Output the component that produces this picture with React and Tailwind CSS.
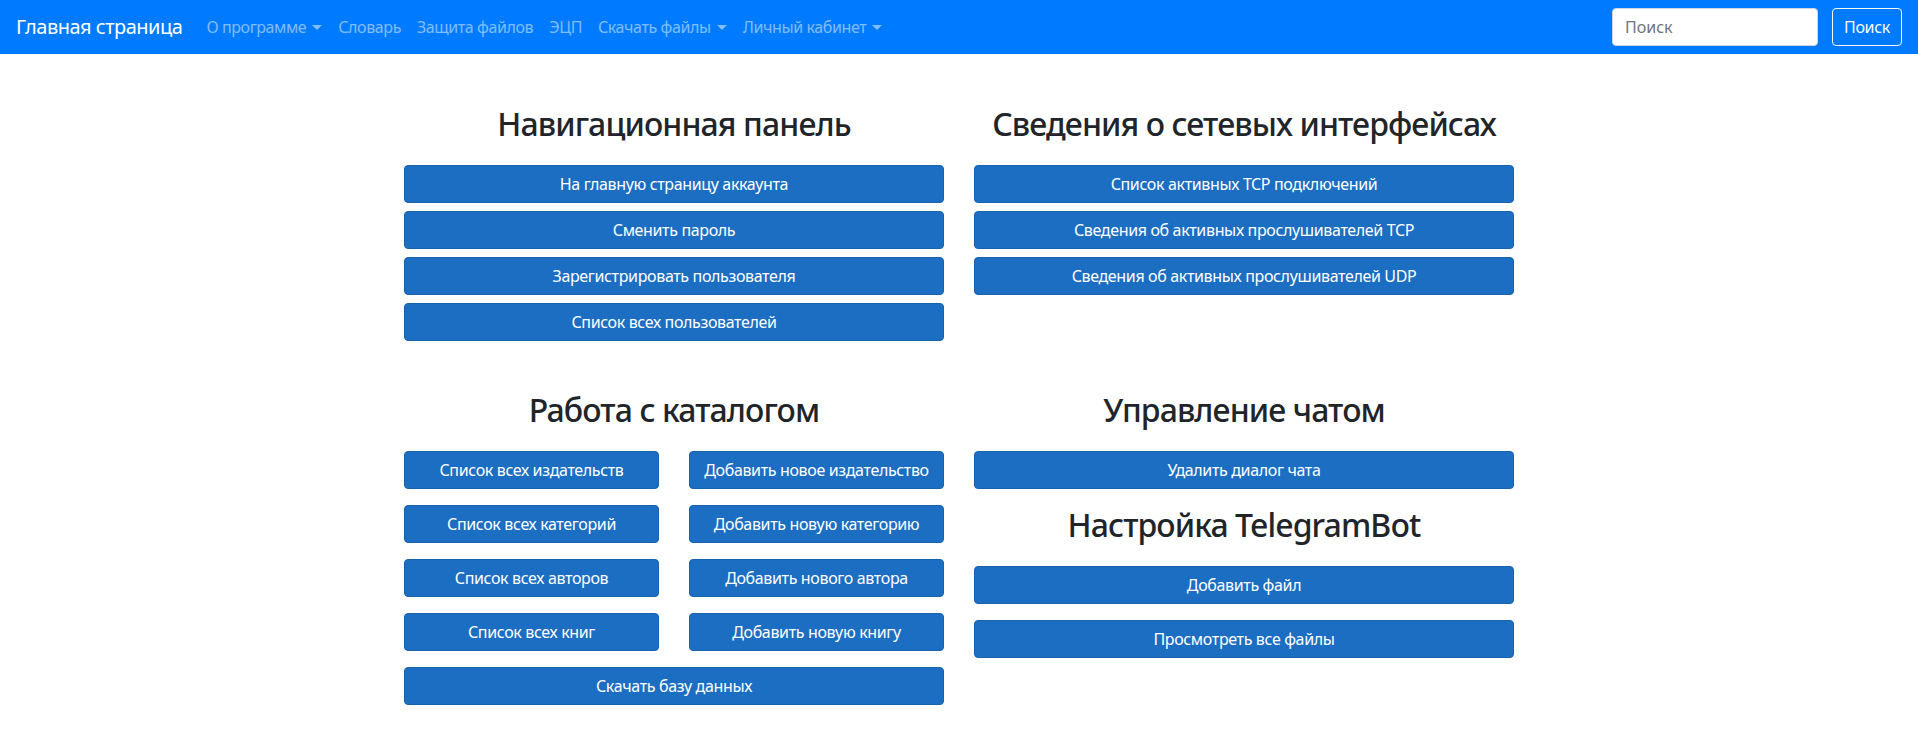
import React from 'react';

const font = { fontFamily: '"Noto Sans", "Open Sans", sans-serif' };

const Caret = () => (
  <span className="inline-block ml-[6px] align-[3px] border-x-[5px] border-t-[5px] border-x-transparent border-t-current" />
);

const Btn = ({ children, className = '' }) => (
  <button
    type="button"
    className={`w-full h-[38px] rounded-[4px] border border-[#1861ac] bg-[#1b6ec2] text-white text-[16px] leading-6 tracking-[-0.35px] ${className}`}
  >
    {children}
  </button>
);

const Heading = ({ children, className = '' }) => (
  <h2 className={`text-center text-[32px] leading-[38px] font-medium text-[#212529] tracking-[-0.9px] mb-[22px] ${className}`}>
    {children}
  </h2>
);

const navLinks = [
  { label: 'О программе', drop: true },
  { label: 'Словарь' },
  { label: 'Защита файлов' },
  { label: 'ЭЦП' },
  { label: 'Скачать файлы', drop: true },
  { label: 'Личный кабинет', drop: true },
];

const catalog = [
  ['Список всех издательств', 'Добавить новое издательство'],
  ['Список всех категорий', 'Добавить новую категорию'],
  ['Список всех авторов', 'Добавить нового автора'],
  ['Список всех книг', 'Добавить новую книгу'],
];

export default function App() {
  return (
    <div className="min-h-screen bg-white" style={font}>
      <nav className="h-[54px] bg-[#007bff] flex items-center px-4">
        <a className="text-white text-[20px] leading-[30px] tracking-[-0.5px] mr-4 whitespace-nowrap">Главная страница</a>
        <ul className="flex items-center">
          {navLinks.map((l) => (
            <li key={l.label} className="px-2 text-[16px] leading-6 tracking-[-0.4px] text-white/50 whitespace-nowrap">
              {l.label}
              {l.drop && <Caret />}
            </li>
          ))}
        </ul>
        <form className="ml-auto flex items-center gap-[14px]">
          <input
            placeholder="Поиск"
            className="w-[206px] h-[38px] rounded-[4px] border border-[#ced4da] bg-white px-3 text-[16px] text-[#495057] placeholder:text-[#6c757d] outline-none"
          />
          <button type="button" className="w-[70px] h-[38px] rounded-[4px] border border-[#f8f9fa] text-[#f8f9fa] text-[16px] tracking-[-0.3px]">
            Поиск
          </button>
        </form>
      </nav>

      <main className="w-[1140px] mx-auto px-[15px] pt-[51px] pb-8">
        <div className="grid grid-cols-2 gap-x-[30px]">
          <section>
            <Heading>Навигационная панель</Heading>
            <div className="flex flex-col gap-2">
              <Btn>На главную страницу аккаунта</Btn>
              <Btn>Сменить пароль</Btn>
              <Btn>Зарегистрировать пользователя</Btn>
              <Btn>Список всех пользователей</Btn>
            </div>
          </section>
          <section>
            <Heading>Сведения о сетевых интерфейсах</Heading>
            <div className="flex flex-col gap-2">
              <Btn>Список активных TCP подключений</Btn>
              <Btn>Сведения об активных прослушивателей TCP</Btn>
              <Btn>Сведения об активных прослушивателей UDP</Btn>
            </div>
          </section>
        </div>

        <div className="grid grid-cols-2 gap-x-[30px] mt-[50px]">
          <section>
            <Heading>Работа с каталогом</Heading>
            <div className="grid grid-cols-2 gap-x-[30px] gap-y-4">
              {catalog.map(([a, b]) => (
                <React.Fragment key={a}>
                  <Btn>{a}</Btn>
                  <Btn>{b}</Btn>
                </React.Fragment>
              ))}
              <Btn className="col-span-2">Скачать базу данных</Btn>
            </div>
          </section>
          <section>
            <Heading>Управление чатом</Heading>
            <Btn>Удалить диалог чата</Btn>
            <Heading className="mt-[17px]">Настройка TelegramBot</Heading>
            <div className="flex flex-col gap-4">
              <Btn>Добавить файл</Btn>
              <Btn>Просмотреть все файлы</Btn>
            </div>
          </section>
        </div>
      </main>
    </div>
  );
}
